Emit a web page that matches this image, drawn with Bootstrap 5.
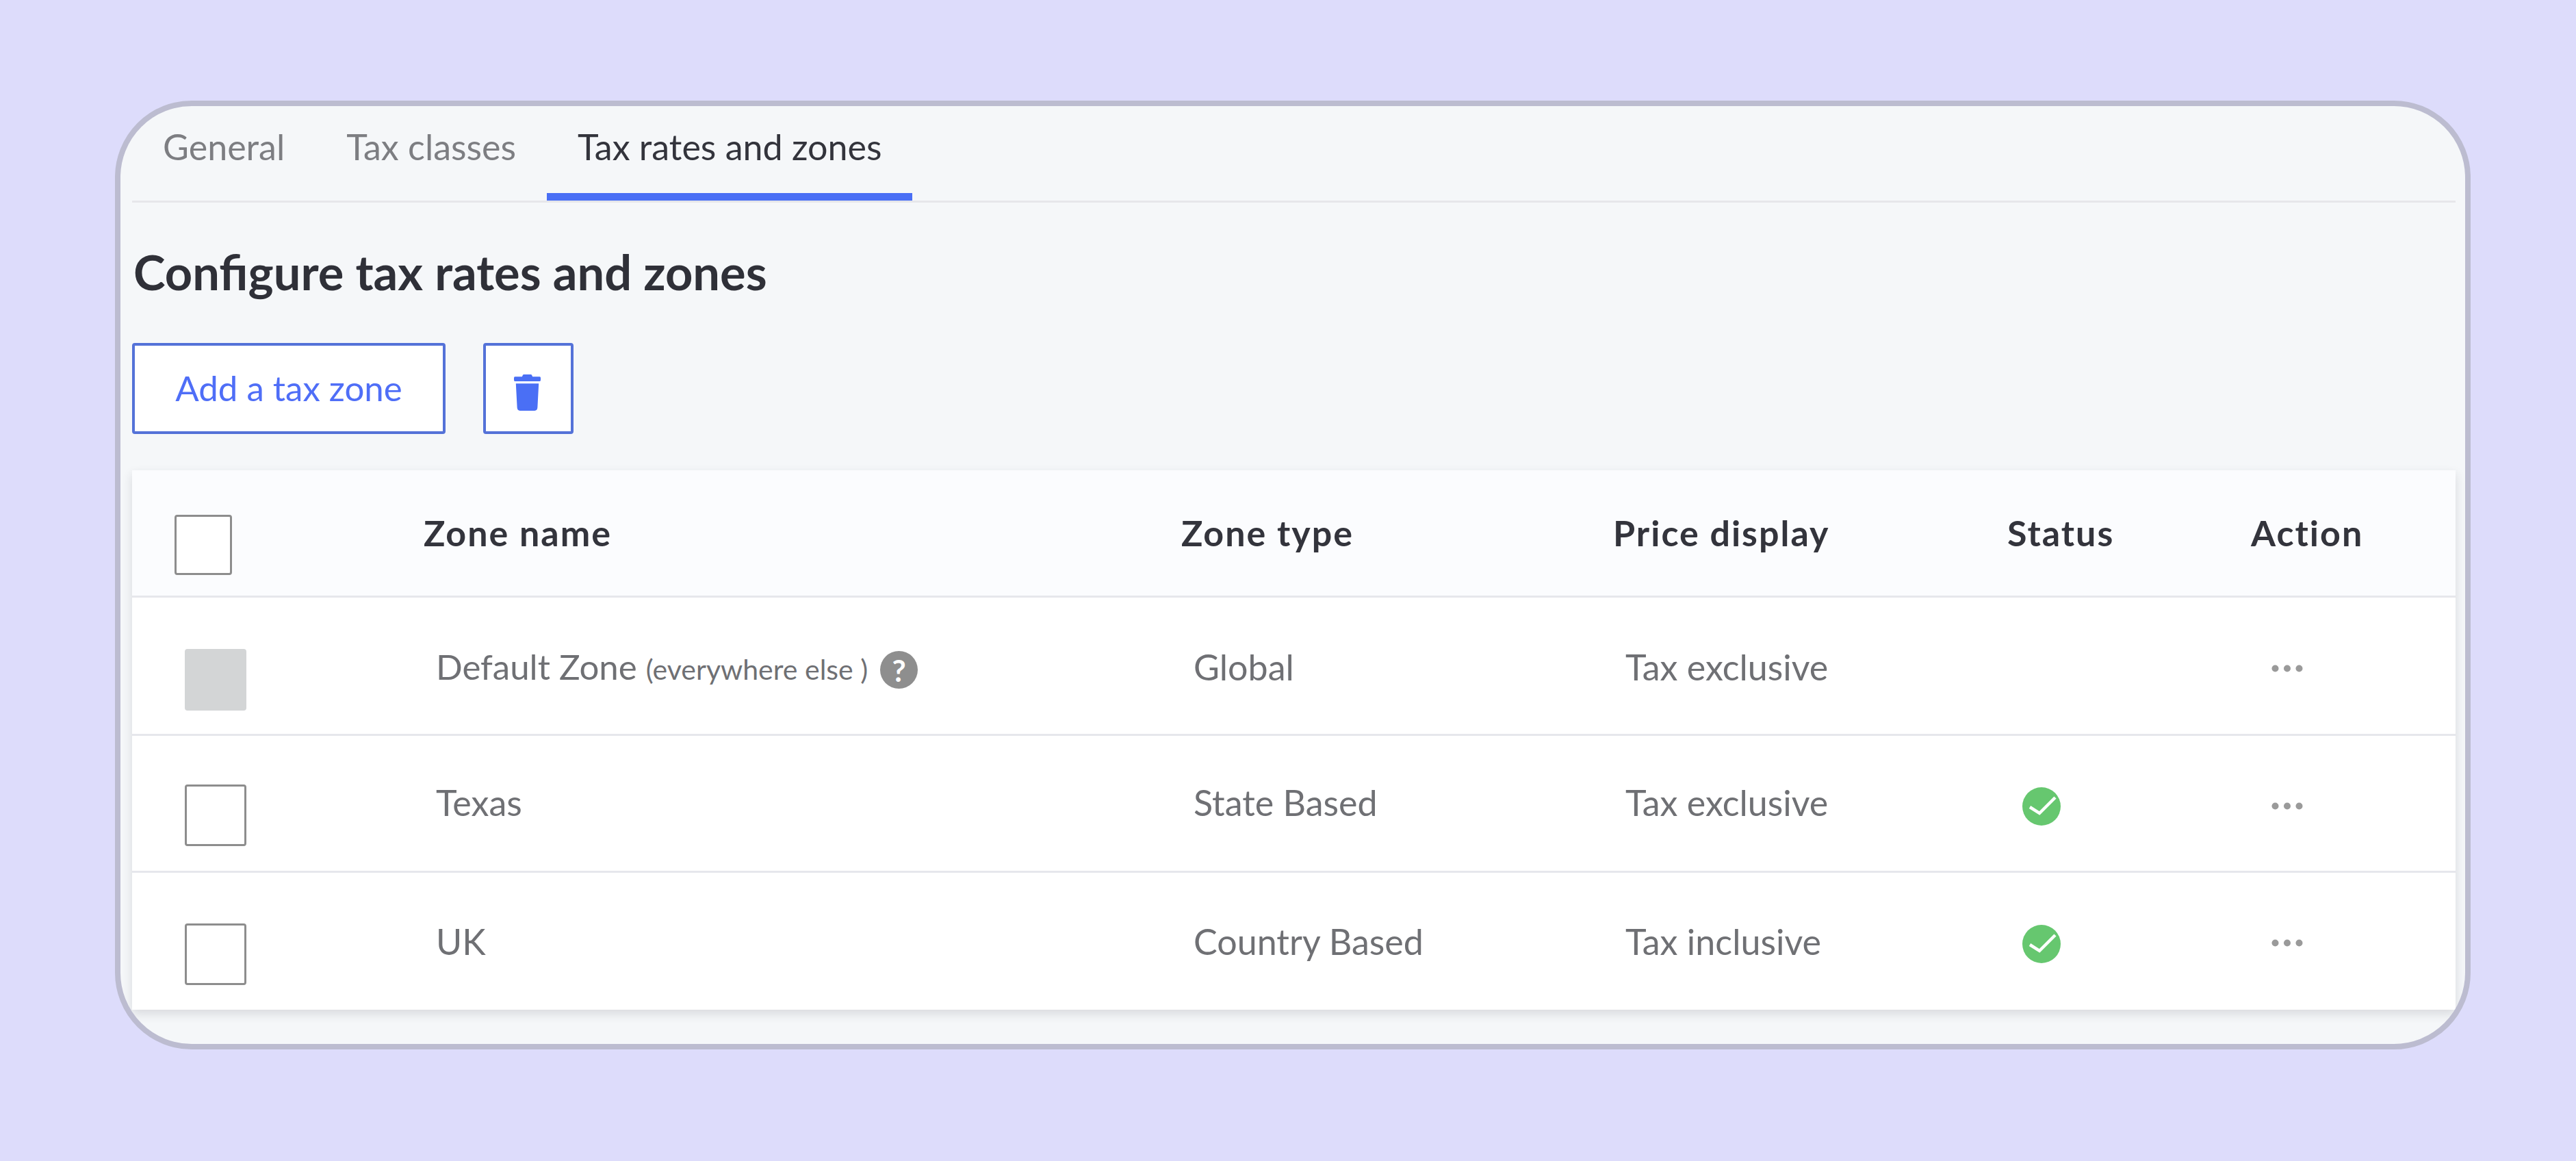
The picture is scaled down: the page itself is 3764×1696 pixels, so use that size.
<!doctype html>
<html lang="en">
<head>
<meta charset="utf-8">
<title>Tax rates and zones</title>
<link href="https://cdn.jsdelivr.net/npm/bootstrap@5.3.3/dist/css/bootstrap.min.css" rel="stylesheet">
<style>
  html, body { height: 100%; }
  body { background: #dddcfb; font-family: "Lato", "Liberation Sans", sans-serif; font-size: 52px; color: #6f7074; overflow: hidden; }
  .tz-page { padding: 147px 154px 0 168px; }
  .tz-frame { height: 1386px; background: #f5f7f9; border: 8px solid #bcbcd0; border-radius: 112px; padding: 0 14px 0 17px; overflow: hidden; }
  .tz-tabs { height: 141px; border-bottom: 3px solid #e6e7ea; }
  .tz-tabs .nav-link { height: 138px; padding: 29px 45px 0; line-height: 60px; color: #7d7e82; font-size: 52px; border-bottom: 11px solid transparent; }
  .tz-tabs .nav-link.active { color: #33343c; border-bottom-color: #4a6ff5; }
  .tz-title { font-size: 70.4px; font-weight: 700; line-height: 80px; color: #2f3038; margin: 61px 0 64px 2px; }
  .tz-btn { height: 133px; border: 4px solid #5472d8; border-radius: 4px; background: #fff; color: #4f6ef7; font-size: 51px; padding: 0; }
  .tz-btn-add { width: 458px; }
  .tz-btn-del { width: 132px; margin-left: 55px; padding-right: 3px; }
  .tz-btn-del svg { width: 39px; height: 53px; fill: #4a6ff5; }
  .tz-card { margin-top: 53px; width: 3395px; box-shadow: 0 6px 14px rgba(40, 40, 60, .14); background: #fff; }
  .tz-table { table-layout: fixed; width: 3395px; margin: 0; --bs-table-bg: transparent; }
  .tz-table th, .tz-table td { padding: 0; border-bottom: 3px solid #e6e7ec; vertical-align: top; line-height: 60px; font-weight: 400; color: #6f7074; }
  .tz-table tr:last-child td { border-bottom: 0; }
  .tz-table thead tr { height: 184px; background: #fbfcfe; }
  .tz-table thead th { padding-top: 61px; font-weight: 700; color: #33343c; font-size: 52px; letter-spacing: 2px; }
  .tz-table td.tz-text { padding-left: 18px; }
  .tz-table td.tz-name { font-size: 51px; }
  .tz-r1 { height: 202px; }
  .tz-r2 { height: 200px; }
  .tz-r3 { height: 202px; }
  .tz-r1 td { padding-top: 71px !important; }
  .tz-r2 td { padding-top: 67px !important; }
  .tz-r3 td { padding-top: 70px !important; }
  .tz-box { display: block; width: 90px; height: 90px; border: 3px solid #8d8d8d; border-radius: 4px; background: #fff; margin: 4px 0 0 77px; }
  .tz-box-head { width: 84px; height: 88px; margin-left: 62px; }
  .tz-box-off { background: #d3d5d6; border-color: #d3d5d6; }
  .tz-sub { font-size: 41px; }
  .tz-help { display: inline-flex; align-items: center; justify-content: center; width: 55px; height: 55px; margin-left: 18px; border-radius: 50%; background: #8e8e8e; color: #fff; font-size: 44px; font-weight: 700; line-height: 1; vertical-align: -3px; }
  .tz-ok { display: block; width: 56px; height: 56px; margin: 8px 0 0 22px; }
  .tz-r3 .tz-ok { margin-top: 6px; }
  .tz-dots { display: block; width: 46px; height: 11px; margin: 27px 0 0 30px; }
  .tz-r2 .tz-dots { margin-top: 30px; }
</style>
</head>
<body>
<div class="tz-page">
  <div class="tz-frame">
    <ul class="nav tz-tabs">
      <li class="nav-item"><a class="nav-link" href="#">General</a></li>
      <li class="nav-item"><a class="nav-link" href="#">Tax classes</a></li>
      <li class="nav-item"><a class="nav-link active" href="#">Tax rates and zones</a></li>
    </ul>
    <h1 class="tz-title">Configure tax rates and zones</h1>
    <div class="d-flex">
      <button class="btn tz-btn tz-btn-add" type="button">Add a tax zone</button>
      <button class="btn tz-btn tz-btn-del" type="button" aria-label="Delete">
        <svg viewBox="0 0 448 512" preserveAspectRatio="none"><path d="M432 32H312l-9.4-18.7A24 24 0 0 0 281.1 0H166.8a23.72 23.72 0 0 0-21.4 13.3L136 32H16A16 16 0 0 0 0 48v32a16 16 0 0 0 16 16h416a16 16 0 0 0 16-16V48a16 16 0 0 0-16-16zM53.2 467a48 48 0 0 0 47.9 45h245.8a48 48 0 0 0 47.9-45L416 128H32z"/></svg>
      </button>
    </div>
    <div class="tz-card">
      <table class="table tz-table">
        <colgroup>
          <col style="width:426px"><col style="width:1107px"><col style="width:631px"><col style="width:576px"><col style="width:356px"><col style="width:299px">
        </colgroup>
        <thead>
          <tr>
            <th><span class="tz-box tz-box-head"></span></th>
            <th>Zone name</th>
            <th>Zone type</th>
            <th>Price display</th>
            <th>Status</th>
            <th>Action</th>
          </tr>
        </thead>
        <tbody>
          <tr class="tz-r1">
            <td><span class="tz-box tz-box-off"></span></td>
            <td class="tz-text tz-name">Default Zone <span class="tz-sub">(everywhere else )</span><span class="tz-help">?</span></td>
            <td class="tz-text">Global</td>
            <td class="tz-text">Tax exclusive</td>
            <td></td>
            <td><svg class="tz-dots" viewBox="0 0 46 11"><circle cx="5.5" cy="5.5" r="5" fill="#9a9a9a"/><circle cx="23" cy="5.5" r="5" fill="#9a9a9a"/><circle cx="40.5" cy="5.5" r="5" fill="#9a9a9a"/></svg></td>
          </tr>
          <tr class="tz-r2">
            <td><span class="tz-box"></span></td>
            <td class="tz-text">Texas</td>
            <td class="tz-text">State Based</td>
            <td class="tz-text">Tax exclusive</td>
            <td><svg class="tz-ok" viewBox="0 0 56 56"><circle cx="28" cy="28" r="28" fill="#66c76f"/><path d="M11 29l14 9 23-23" fill="none" stroke="#fff" stroke-width="4.5"/></svg></td>
            <td><svg class="tz-dots" viewBox="0 0 46 11"><circle cx="5.5" cy="5.5" r="5" fill="#9a9a9a"/><circle cx="23" cy="5.5" r="5" fill="#9a9a9a"/><circle cx="40.5" cy="5.5" r="5" fill="#9a9a9a"/></svg></td>
          </tr>
          <tr class="tz-r3">
            <td><span class="tz-box"></span></td>
            <td class="tz-text">UK</td>
            <td class="tz-text">Country Based</td>
            <td class="tz-text">Tax inclusive</td>
            <td><svg class="tz-ok" viewBox="0 0 56 56"><circle cx="28" cy="28" r="28" fill="#66c76f"/><path d="M11 29l14 9 23-23" fill="none" stroke="#fff" stroke-width="4.5"/></svg></td>
            <td><svg class="tz-dots" viewBox="0 0 46 11"><circle cx="5.5" cy="5.5" r="5" fill="#9a9a9a"/><circle cx="23" cy="5.5" r="5" fill="#9a9a9a"/><circle cx="40.5" cy="5.5" r="5" fill="#9a9a9a"/></svg></td>
          </tr>
        </tbody>
      </table>
    </div>
  </div>
</div>
<script src="https://cdn.jsdelivr.net/npm/bootstrap@5.3.3/dist/js/bootstrap.bundle.min.js"></script>
</body>
</html>
